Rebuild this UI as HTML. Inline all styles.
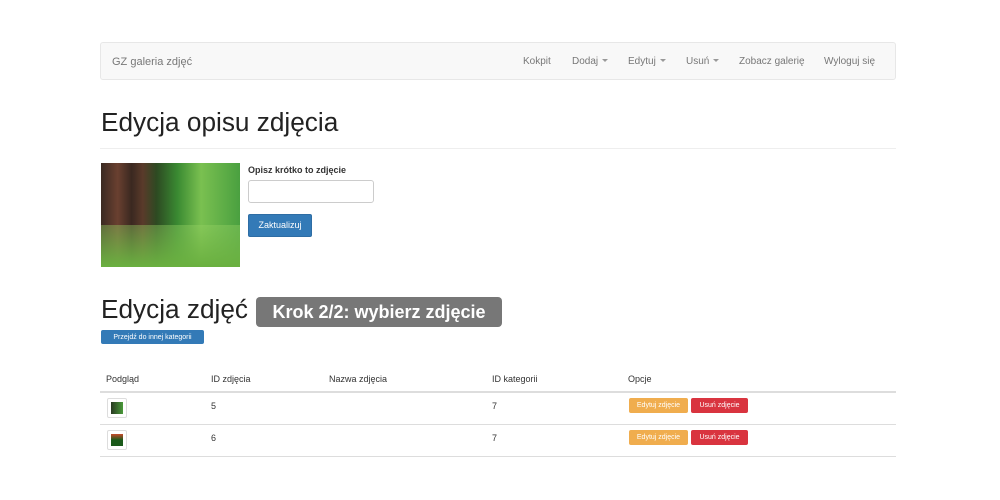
<!DOCTYPE html>
<html><head><meta charset="utf-8"><style>
*{box-sizing:border-box;margin:0;padding:0}
body{width:1000px;height:500px;background:#fff;font-family:"Liberation Sans",sans-serif;color:#333;position:relative;overflow:hidden}
.a{position:absolute}
.nav{left:100px;top:42px;width:796px;height:38px;background:#f8f8f8;border:1px solid #e7e7e7;border-radius:3px}
.nav span{position:absolute;top:13px;font-size:10px;color:#777}
.btn{position:absolute;color:#fff;border-radius:2px;text-align:center}
.c{border-left:4px solid transparent;border-right:4px solid transparent;border-top:4px solid #999;display:inline-block;width:0;height:0;margin-left:4px;vertical-align:2px;border-width:3px 3px 0}
.th{font-size:9px;position:absolute;top:374px;color:#333}
.td{font-size:9px;position:absolute;color:#333}
.hr{position:absolute;left:100px;width:796px;height:1px;background:#ddd}
.sb{font-size:7px;line-height:16px}
</style></head><body>
<div class="a nav">
<span style="left:11px;font-size:11px">GZ galeria zdjęć</span>
<span style="left:422px">Kokpit</span>
<span style="left:471px">Dodaj<i class="c"></i></span>
<span style="left:527px">Edytuj<i class="c"></i></span>
<span style="left:585px">Usuń<i class="c"></i></span>
<span style="left:638px">Zobacz galerię</span>
<span style="left:723px">Wyloguj się</span>
</div>
<div class="a" style="left:101px;top:107px;font-size:26.2px;color:#222">Edycja opisu zdjęcia</div>
<div class="hr" style="top:148px;background:#eee"></div>
<div class="a" style="left:101px;top:163px;width:139px;height:104px;background:linear-gradient(90deg,#3a2a22 0%,#6a4030 12%,#3a2820 22%,#5a3a2a 30%,#2d4a22 40%,#3a8a32 55%,#7ac050 72%,#4aa040 100%)"></div>
<div class="a" style="left:101px;top:225px;width:139px;height:42px;background:linear-gradient(180deg,rgba(150,210,100,.4),#6ab040)"></div>
<div class="a" style="left:248px;top:165px;font-size:9px;font-weight:bold">Opisz krótko to zdjęcie</div>
<div class="a" style="left:248px;top:180px;width:126px;height:23px;border:1px solid #ccc;border-radius:3px"></div>
<div class="btn" style="left:248px;top:214px;width:64px;height:23px;background:#337ab7;border:1px solid #2e6da4;font-size:9px;line-height:21px">Zaktualizuj</div>
<div class="a" style="left:101px;top:294px;font-size:26.2px;color:#222">Edycja zdjęć</div>
<div class="btn" style="left:256px;top:297px;width:246px;height:30px;background:#777;border-radius:4px;font-size:18px;font-weight:bold;line-height:30px">Krok 2/2: wybierz zdjęcie</div>
<div class="btn" style="left:101px;top:330px;width:103px;height:14px;background:#337ab7;font-size:7px;line-height:15px">Przejdź do innej kategorii</div>
<div class="th" style="left:106px">Podgląd</div>
<div class="th" style="left:211px">ID zdjęcia</div>
<div class="th" style="left:329px">Nazwa zdjęcia</div>
<div class="th" style="left:492px">ID kategorii</div>
<div class="th" style="left:628px">Opcje</div>
<div class="hr" style="top:391px;height:2px"></div>
<div class="hr" style="top:424px"></div>
<div class="hr" style="top:456px"></div>
<div class="a" style="left:107px;top:398px;width:20px;height:20px;border:1px solid #ddd;border-radius:2px;padding:3px"><div style="width:12px;height:12px;background:linear-gradient(90deg,#2a3a22,#4a9a3a)"></div></div>
<div class="a" style="left:107px;top:430px;width:20px;height:20px;border:1px solid #ddd;border-radius:2px;padding:3px"><div style="width:12px;height:12px;background:linear-gradient(180deg,#c84a2a,#1a5a1a 50%)"></div></div>
<div class="td" style="left:211px;top:401px">5</div>
<div class="td" style="left:492px;top:401px">7</div>
<div class="td" style="left:211px;top:433px">6</div>
<div class="td" style="left:492px;top:433px">7</div>
<div class="btn sb" style="left:629px;top:398px;width:59px;height:15px;background:#f0ad4e">Edytuj zdjęcie</div>
<div class="btn sb" style="left:691px;top:398px;width:57px;height:15px;background:#d9343f">Usuń zdjęcie</div>
<div class="btn sb" style="left:629px;top:430px;width:59px;height:15px;background:#f0ad4e">Edytuj zdjęcie</div>
<div class="btn sb" style="left:691px;top:430px;width:57px;height:15px;background:#d9343f">Usuń zdjęcie</div>
</body></html>
